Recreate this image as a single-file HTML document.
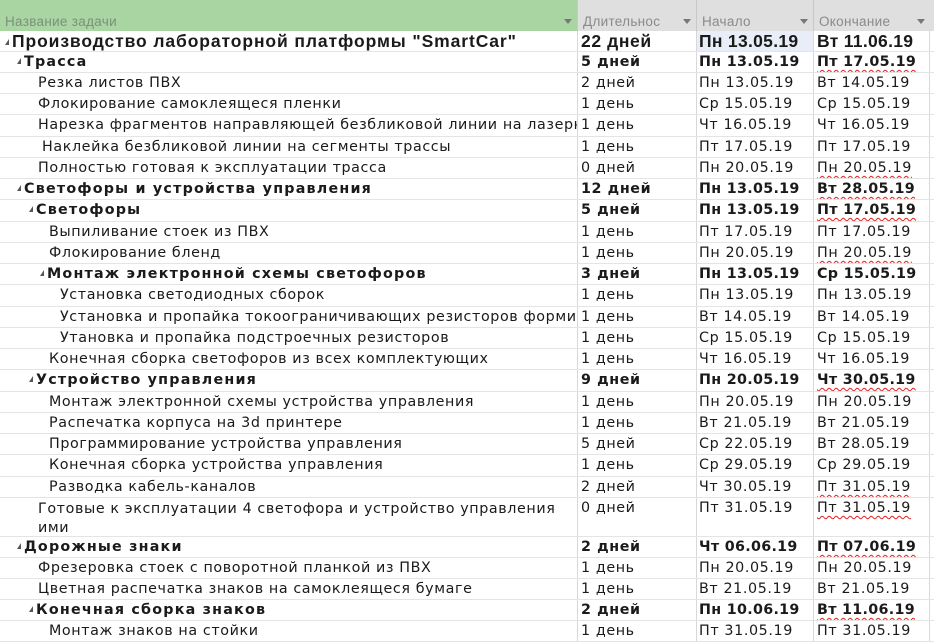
<!DOCTYPE html>
<html><head><meta charset="utf-8"><style>
*{margin:0;padding:0;box-sizing:border-box}
body{width:934px;height:628px;overflow:hidden;background:#fff;font-family:"DejaVu Sans","Liberation Sans",sans-serif;font-size:14.3px;color:#1a1a1a;letter-spacing:0.6px}
.hdr{position:absolute;top:0;left:0;width:934px;height:31px;background:#dfdfdf;color:#8a8a8a;font-family:"Liberation Sans",sans-serif;font-size:13.5px;letter-spacing:0.3px}
.hdr div{position:absolute;top:0;height:31px;padding-top:14px;padding-left:5px}
.hdr .dd{position:absolute;right:5px;top:19px;width:0;height:0;border-left:4px solid transparent;border-right:4px solid transparent;border-top:5px solid #777}
.row{position:absolute;left:0;width:934px;border-bottom:1px solid #e4e4e4;white-space:nowrap}
.c{position:absolute;top:0;height:100%;overflow:hidden;padding-top:2px}
.n{left:0;width:577px}
.d{left:577px;width:119px;padding-left:3px;border-left:1px solid #d8d8d8}
.s{left:696px;width:117px;padding-left:2px;border-left:1px solid #d8d8d8}
.e{left:813px;width:117px;padding-left:3px;border-left:1px solid #d8d8d8;border-right:1px solid #d8d8d8}
.b{font-weight:bold}
.b .n{letter-spacing:1.2px}
.b .s,.b .e{letter-spacing:0.3px}
.w{text-decoration:underline wavy #e02020;text-decoration-thickness:1px;text-underline-offset:3px}
.t{display:inline-block;width:0;height:0;border-left:4px solid transparent;border-bottom:6px solid #555;margin-right:3px;vertical-align:2px}
</style></head><body>
<div class="hdr">
<div style="left:0;width:577px;background:#a9d5a3;color:#7c8f7a">Название задачи<span class="dd"></span></div>
<div style="left:577px;width:119px;border-left:1px solid #c8c8c8">Длительнос<span class="dd"></span></div>
<div style="left:696px;width:117px;border-left:1px solid #c8c8c8">Начало<span class="dd"></span></div>
<div style="left:813px;width:117px;border-left:1px solid #c8c8c8">Окончание<span class="dd"></span></div>
</div>

<div class="row b" style="top:31px;height:21px;font-family:'Liberation Sans',sans-serif;font-size:17.5px"><div class="c n" style="padding-left:5px;padding-top:0;letter-spacing:0.9px"><span class="t"></span>Производство лабораторной платформы "SmartCar"</div><div class="c d" style="padding-top:0">22 дней</div><div class="c s" style="background:#e8edf7;padding-top:0">Пн 13.05.19</div><div class="c e" style="padding-top:0">Вт 11.06.19</div></div>

<div class="row b" style="top:52px;height:21px"><div class="c n" style="padding-left:17px"><span class="t"></span>Трасса</div><div class="c d">5 дней</div><div class="c s">Пн 13.05.19</div><div class="c e"><span class="w">Пт 17.05.19</span></div></div>
<div class="row" style="top:73px;height:21px"><div class="c n" style="padding-left:38px">Резка листов ПВХ</div><div class="c d">2 дней</div><div class="c s">Пн 13.05.19</div><div class="c e">Вт 14.05.19</div></div>
<div class="row" style="top:94px;height:21px"><div class="c n" style="padding-left:38px">Флокирование самоклеящеся пленки</div><div class="c d">1 день</div><div class="c s">Ср 15.05.19</div><div class="c e">Ср 15.05.19</div></div>
<div class="row" style="top:115px;height:22px"><div class="c n" style="padding-left:38px">Нарезка фрагментов направляющей безбликовой линии на лазерном станке</div><div class="c d">1 день</div><div class="c s">Чт 16.05.19</div><div class="c e">Чт 16.05.19</div></div>
<div class="row" style="top:137px;height:21px"><div class="c n" style="padding-left:42px">Наклейка безбликовой линии на сегменты трассы</div><div class="c d">1 день</div><div class="c s">Пт 17.05.19</div><div class="c e">Пт 17.05.19</div></div>
<div class="row" style="top:158px;height:21px"><div class="c n" style="padding-left:38px">Полностью готовая к эксплуатации трасса</div><div class="c d">0 дней</div><div class="c s">Пн 20.05.19</div><div class="c e"><span class="w">Пн 20.05.19</span></div></div>
<div class="row b" style="top:179px;height:21px"><div class="c n" style="padding-left:17px"><span class="t"></span>Светофоры и устройства управления</div><div class="c d">12 дней</div><div class="c s">Пн 13.05.19</div><div class="c e"><span class="w">Вт 28.05.19</span></div></div>
<div class="row b" style="top:200px;height:22px"><div class="c n" style="padding-left:29px"><span class="t"></span>Светофоры</div><div class="c d">5 дней</div><div class="c s">Пн 13.05.19</div><div class="c e"><span class="w">Пт 17.05.19</span></div></div>
<div class="row" style="top:222px;height:21px"><div class="c n" style="padding-left:49px">Выпиливание стоек из ПВХ</div><div class="c d">1 день</div><div class="c s">Пт 17.05.19</div><div class="c e">Пт 17.05.19</div></div>
<div class="row" style="top:243px;height:21px"><div class="c n" style="padding-left:49px">Флокирование бленд</div><div class="c d">1 день</div><div class="c s">Пн 20.05.19</div><div class="c e"><span class="w">Пн 20.05.19</span></div></div>
<div class="row b" style="top:264px;height:21px"><div class="c n" style="padding-left:40px"><span class="t"></span>Монтаж электронной схемы светофоров</div><div class="c d">3 дней</div><div class="c s">Пн 13.05.19</div><div class="c e">Ср 15.05.19</div></div>
<div class="row" style="top:285px;height:22px"><div class="c n" style="padding-left:60px">Установка светодиодных сборок</div><div class="c d">1 день</div><div class="c s">Пн 13.05.19</div><div class="c e">Пн 13.05.19</div></div>
<div class="row" style="top:307px;height:21px"><div class="c n" style="padding-left:60px">Установка и пропайка токоограничивающих резисторов формирования</div><div class="c d">1 день</div><div class="c s">Вт 14.05.19</div><div class="c e">Вт 14.05.19</div></div>
<div class="row" style="top:328px;height:21px"><div class="c n" style="padding-left:60px">Утановка и пропайка подстроечных резисторов</div><div class="c d">1 день</div><div class="c s">Ср 15.05.19</div><div class="c e">Ср 15.05.19</div></div>
<div class="row" style="top:349px;height:21px"><div class="c n" style="padding-left:49px">Конечная сборка светофоров из всех комплектующих</div><div class="c d">1 день</div><div class="c s">Чт 16.05.19</div><div class="c e">Чт 16.05.19</div></div>
<div class="row b" style="top:370px;height:22px"><div class="c n" style="padding-left:29px"><span class="t"></span>Устройство управления</div><div class="c d">9 дней</div><div class="c s">Пн 20.05.19</div><div class="c e"><span class="w">Чт 30.05.19</span></div></div>
<div class="row" style="top:392px;height:21px"><div class="c n" style="padding-left:49px">Монтаж электронной схемы устройства управления</div><div class="c d">1 день</div><div class="c s">Пн 20.05.19</div><div class="c e">Пн 20.05.19</div></div>
<div class="row" style="top:413px;height:21px"><div class="c n" style="padding-left:49px">Распечатка корпуса на 3d принтере</div><div class="c d">1 день</div><div class="c s">Вт 21.05.19</div><div class="c e">Вт 21.05.19</div></div>
<div class="row" style="top:434px;height:21px"><div class="c n" style="padding-left:49px">Программирование устройства управления</div><div class="c d">5 дней</div><div class="c s">Ср 22.05.19</div><div class="c e">Вт 28.05.19</div></div>
<div class="row" style="top:455px;height:22px"><div class="c n" style="padding-left:49px">Конечная сборка устройства управления</div><div class="c d">1 день</div><div class="c s">Ср 29.05.19</div><div class="c e">Ср 29.05.19</div></div>
<div class="row" style="top:477px;height:21px"><div class="c n" style="padding-left:49px">Разводка кабель-каналов</div><div class="c d">2 дней</div><div class="c s">Чт 30.05.19</div><div class="c e"><span class="w">Пт 31.05.19</span></div></div>
<div class="row" style="top:498px;height:39px"><div class="c n" style="padding-left:38px;line-height:19px">Готовые к эксплуатации 4 светофора и устройство управления<br>ими</div><div class="c d">0 дней</div><div class="c s">Пт 31.05.19</div><div class="c e"><span class="w">Пт 31.05.19</span></div></div>
<div class="row b" style="top:537px;height:21px"><div class="c n" style="padding-left:17px"><span class="t"></span>Дорожные знаки</div><div class="c d">2 дней</div><div class="c s">Чт 06.06.19</div><div class="c e"><span class="w">Пт 07.06.19</span></div></div>
<div class="row" style="top:558px;height:21px"><div class="c n" style="padding-left:38px">Фрезеровка стоек с поворотной планкой из ПВХ</div><div class="c d">1 день</div><div class="c s">Пн 20.05.19</div><div class="c e">Пн 20.05.19</div></div>
<div class="row" style="top:579px;height:21px"><div class="c n" style="padding-left:38px">Цветная распечатка знаков на самоклеящеся бумаге</div><div class="c d">1 день</div><div class="c s">Вт 21.05.19</div><div class="c e">Вт 21.05.19</div></div>
<div class="row b" style="top:600px;height:21px"><div class="c n" style="padding-left:29px"><span class="t"></span>Конечная сборка знаков</div><div class="c d">2 дней</div><div class="c s">Пн 10.06.19</div><div class="c e"><span class="w">Вт 11.06.19</span></div></div>
<div class="row" style="top:621px;height:21px"><div class="c n" style="padding-left:49px">Монтаж знаков на стойки</div><div class="c d">1 день</div><div class="c s">Пт 31.05.19</div><div class="c e">Пт 31.05.19</div></div>
</body></html>
